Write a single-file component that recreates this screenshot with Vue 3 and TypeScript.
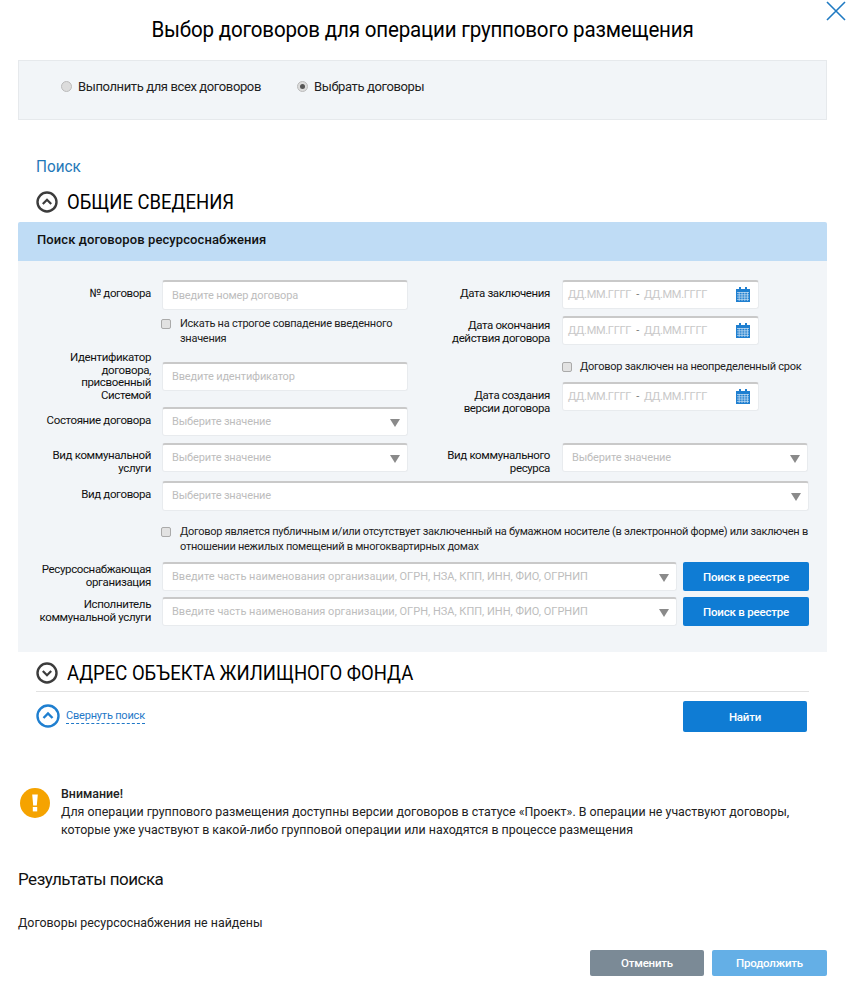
<template>
  <div class="modal">
    <svg class="close" viewBox="0 0 20 20" width="20" height="20">
      <path d="M1 1 L19 19 M19 1 L1 19" stroke="#1f7ac2" stroke-width="1.6" fill="none" />
    </svg>
    <h1 class="title">Выбор договоров для операции группового размещения</h1>

    <div class="radio-panel">
      <label class="radio"><span class="radio-dot"></span>Выполнить для всех договоров</label>
      <label class="radio"><span class="radio-dot on"></span>Выбрать договоры</label>
    </div>

    <div class="search-link"><span>Поиск</span></div>

    <div class="section-head first">
      <svg class="chev" viewBox="0 0 22 22" width="22" height="22">
        <circle cx="11" cy="11" r="9.5" fill="none" stroke="#3c3c3c" stroke-width="2.4" />
        <path d="M6.8 13 L11 8.8 L15.2 13" fill="none" stroke="#3c3c3c" stroke-width="2.2" />
      </svg>
      <span class="head-text">ОБЩИЕ СВЕДЕНИЯ</span>
    </div>

    <div class="form-head">Поиск договоров ресурсоснабжения</div>
    <div class="form-body">
      <div class="cols">
        <div class="col">
          <div class="row">
            <div class="lbl">№ договора</div>
            <div class="field h29 short">Введите номер договора</div>
          </div>
          <div class="check-row strict">
            <span class="cb"></span>
            <span>Искать на строгое совпадение введенного значения</span>
          </div>
          <div class="row id-row">
            <div class="lbl tight">Идентификатор договора, присвоенный Системой</div>
            <div class="field h28 short">Введите идентификатор</div>
          </div>
          <div class="row state-row">
            <div class="lbl">Состояние договора</div>
            <div class="field h28 select short">Выберите значение<i class="arrow"></i></div>
          </div>
          <div class="row kind-row fixed">
            <div class="lbl tight">Вид коммунальной услуги</div>
            <div class="field h28 select short">Выберите значение<i class="arrow"></i></div>
          </div>
        </div>

        <div class="col right">
          <div class="row">
            <div class="lbl">Дата заключения</div>
            <div class="field h28 date">
              <span>ДД.ММ.ГГГГ</span><b>-</b><span>ДД.ММ.ГГГГ</span>
              <svg class="cal" viewBox="0 0 14 15" width="14" height="15">
                <path d="M0 2h14v13H0z" fill="#1f7fd0" />
                <path d="M3 0h2v3H3zM9 0h2v3H9z" fill="#1f7fd0" />
                <path d="M1 5.5h12M1 7.8h12M1 10.1h12M1 12.4h12M3.2 5v9M6 5v9M8.8 5v9M11.4 5v9" stroke="#cfe2f3" stroke-width=".7" />
              </svg>
            </div>
          </div>
          <div class="row end-row">
            <div class="lbl tight">Дата окончания<br />действия договора</div>
            <div class="field h28 date">
              <span>ДД.ММ.ГГГГ</span><b>-</b><span>ДД.ММ.ГГГГ</span>
              <svg class="cal" viewBox="0 0 14 15" width="14" height="15">
                <path d="M0 2h14v13H0z" fill="#1f7fd0" />
                <path d="M3 0h2v3H3zM9 0h2v3H9z" fill="#1f7fd0" />
                <path d="M1 5.5h12M1 7.8h12M1 10.1h12M1 12.4h12M3.2 5v9M6 5v9M8.8 5v9M11.4 5v9" stroke="#cfe2f3" stroke-width=".7" />
              </svg>
            </div>
          </div>
          <div class="check-row open-term">
            <span class="cb"></span>
            <span>Договор заключен на неопределенный срок</span>
          </div>
          <div class="row created-row fixed">
            <div class="lbl tight">Дата создания<br />версии договора</div>
            <div class="field h28 date">
              <span>ДД.ММ.ГГГГ</span><b>-</b><span>ДД.ММ.ГГГГ</span>
              <svg class="cal" viewBox="0 0 14 15" width="14" height="15">
                <path d="M0 2h14v13H0z" fill="#1f7fd0" />
                <path d="M3 0h2v3H3zM9 0h2v3H9z" fill="#1f7fd0" />
                <path d="M1 5.5h12M1 7.8h12M1 10.1h12M1 12.4h12M3.2 5v9M6 5v9M8.8 5v9M11.4 5v9" stroke="#cfe2f3" stroke-width=".7" />
              </svg>
            </div>
          </div>
          <div class="row resource-row fixed">
            <div class="lbl tight">Вид коммунального<br />ресурса</div>
            <div class="field h28 select short">Выберите значение<i class="arrow"></i></div>
          </div>
        </div>
      </div>

      <div class="row contract-row">
        <div class="lbl">Вид договора</div>
        <div class="field h29 select grow short">Выберите значение<i class="arrow"></i></div>
      </div>

      <div class="check-row public">
        <span class="cb"></span>
        <span>Договор является публичным и/или отсутствует заключенный на бумажном носителе (в электронной форме) или заключен в отношении нежилых помещений в многоквартирных домах</span>
      </div>

      <div class="row org-row fixed">
        <div class="lbl tight">Ресурсоснабжающая организация</div>
        <div class="field h28 select grow">Введите часть наименования организации, ОГРН, НЗА, КПП, ИНН, ФИО, ОГРНИП<i class="arrow"></i></div>
        <button class="btn registry">Поиск в реестре</button>
      </div>
      <div class="row org-row fixed">
        <div class="lbl tight">Исполнитель<br />коммунальной услуги</div>
        <div class="field h28 select grow">Введите часть наименования организации, ОГРН, НЗА, КПП, ИНН, ФИО, ОГРНИП<i class="arrow"></i></div>
        <button class="btn registry">Поиск в реестре</button>
      </div>
    </div>

    <div class="section-head address">
      <svg class="chev" viewBox="0 0 22 22" width="22" height="22">
        <circle cx="11" cy="11" r="9.5" fill="none" stroke="#3c3c3c" stroke-width="2.4" />
        <path d="M6.8 9 L11 13.2 L15.2 9" fill="none" stroke="#3c3c3c" stroke-width="2.2" />
      </svg>
      <span class="head-text">АДРЕС ОБЪЕКТА ЖИЛИЩНОГО ФОНДА</span>
    </div>

    <div class="search-actions">
      <div class="collapse">
        <svg viewBox="0 0 24 24" width="24" height="24">
          <circle cx="12" cy="12" r="10.5" fill="none" stroke="#1f7fd0" stroke-width="2.4" />
          <path d="M7.5 14 L12 9.5 L16.5 14" fill="none" stroke="#1f7fd0" stroke-width="2.4" />
        </svg>
        <span>Свернуть поиск</span>
      </div>
      <button class="btn find">Найти</button>
    </div>

    <div class="notice">
      <svg viewBox="0 0 30 30" width="30" height="30">
        <circle cx="15" cy="15" r="15" fill="#f5a300" />
        <path d="M12.2 6.5h5.6l-1 11h-3.6z" fill="#fff" />
        <rect x="12.8" y="19" width="4.4" height="4.4" fill="#fff" />
      </svg>
      <div class="notice-text">
        <strong>Внимание!</strong>
        <p>Для операции группового размещения доступны версии договоров в статусе «Проект». В операции не участвуют договоры, которые уже участвуют в какой-либо групповой операции или находятся в процессе размещения</p>
      </div>
    </div>

    <h2 class="results">Результаты поиска</h2>
    <div class="empty">Договоры ресурсоснабжения не найдены</div>

    <div class="footer">
      <button class="btn cancel">Отменить</button>
      <button class="btn proceed">Продолжить</button>
    </div>
  </div>
</template>

<script setup lang="ts">
</script>

<style>
html, body {
  background: #fff;
}
</style>

<style scoped>
.modal {
  position: relative;
  width: 849px;
  height: 985px;
  box-sizing: border-box;
  padding: 0 22px 0 18px;
  font-family: Roboto, "Liberation Sans", sans-serif;
  font-size: 12px;
  color: #111;
  overflow: hidden;
}

.close {
  position: absolute;
  top: 1px;
  right: 3px;
}

.title {
  margin: 0;
  padding-top: 17px;
  height: 60px;
  box-sizing: border-box;
  text-align: center;
  font-size: 22px;
  line-height: 26px;
  font-weight: 400;
  color: #000;
  letter-spacing: -0.2px;
  transform: scaleX(0.934);
}

.radio-panel {
  height: 60px;
  box-sizing: border-box;
  display: flex;
  gap: 36px;
  padding: 17px 0 0 42px;
  background: #f2f5f8;
  border: 1px solid #e6e9ec;
}

.radio {
  display: flex;
  align-items: center;
  gap: 6px;
  height: 17px;
  font-size: 13px;
  letter-spacing: -0.38px;
  color: #222;
}

.radio-dot {
  width: 9px;
  height: 9px;
  border-radius: 50%;
  background: #dcdcdc;
  border: 1px solid #bbb;
  position: relative;
}

.radio-dot.on::after {
  content: "";
  position: absolute;
  top: 2px;
  left: 2px;
  width: 5px;
  height: 5px;
  border-radius: 50%;
  background: #555;
}

.search-link {
  margin: 36px 0 0 18px;
  font-size: 17px;
  line-height: 20px;
  color: #1f78b8;
}

.search-link span {
  display: inline-block;
  transform: scaleX(0.9);
  transform-origin: left;
}

.section-head {
  display: flex;
  align-items: center;
  gap: 9px;
  font-size: 21px;
  line-height: 26px;
  color: #000;
  white-space: nowrap;
}

.head-text {
  display: inline-block;
  transform: scaleX(0.88);
  transform-origin: left;
}

.section-head.first {
  margin: 13px 0 0 18px;
  height: 26px;
}

.form-head {
  margin-top: 7px;
  height: 39px;
  line-height: 36px;
  padding-left: 19px;
  background: #bfdcf5;
  font-weight: 500;
  font-size: 13px;
  letter-spacing: 0.1px;
  color: #111;
  border-radius: 2px 2px 0 0;
}

.form-body {
  height: 391px;
  box-sizing: border-box;
  padding: 19px 18px 0;
  background: #f2f5f8;
}

.cols {
  display: flex;
}

.col {
  flex: none;
  width: 372px;
}

.col.right {
  width: 401px;
}

.row {
  display: flex;
  align-items: flex-start;
}

.row.fixed {
  height: 29px;
}

.lbl {
  flex: none;
  width: 115px;
  margin-right: 11px;
  padding-top: 6px;
  text-align: right;
  font-size: 11.5px;
  letter-spacing: -0.37px;
  line-height: 14px;
  color: #111;
}

.lbl.tight {
  line-height: 12.5px;
  padding-top: 6px;
}

.right .lbl {
  width: 142px;
  margin-right: 12px;
}

.field {
  position: relative;
  flex: none;
  width: 246px;
  box-sizing: border-box;
  padding-left: 9px;
  background: #fff;
  border: 1px solid #e8ebee;
  border-top: 2px solid #c9c9c9;
  border-radius: 3px;
  color: #bdbdbd;
  font-size: 11px;
}

.short {
  letter-spacing: -0.15px;
}

.h28 {
  height: 29px;
  line-height: 26px;
}

.h29 {
  height: 30px;
  line-height: 27px;
}

.grow {
  flex: 1;
  width: auto;
}

.arrow {
  position: absolute;
  top: 10px;
  right: 7px;
  width: 0;
  height: 0;
  border-left: 5.5px solid transparent;
  border-right: 5.5px solid transparent;
  border-top: 8px solid #8a8a8a;
}

.date {
  width: 197px;
  padding-left: 5px;
  font-size: 11px;
  letter-spacing: -0.3px;
  color: #c8c8c8;
}

.date b {
  font-weight: 400;
  color: #777;
  margin: 0 5px;
}

.cal {
  position: absolute;
  top: 5px;
  right: 8px;
}

.check-row {
  display: flex;
  gap: 8px;
  font-size: 11px;
  letter-spacing: -0.26px;
  line-height: 15px;
  color: #222;
}

.cb {
  flex: none;
  width: 8px;
  height: 8px;
  margin-top: 3px;
  background: #e2e2e2;
  border: 1px solid #aaa;
  border-radius: 2px;
}

.strict {
  margin: 6px 0 0 125px;
  width: 247px;
  gap: 9px;
}

.id-row {
  margin-top: 6px;
  height: 48px;
}

.id-row .lbl {
  padding-top: 0;
  margin-top: -1px;
}

.id-row .field {
  margin-top: 10px;
}

.state-row,
.kind-row,
.end-row {
  margin-top: 7px;
}

.end-row .lbl {
  padding-top: 3px;
}

.open-term {
  margin: 14px 0 0 154px;
  white-space: nowrap;
}

.created-row {
  margin-top: 8px;
}

.created-row .lbl {
  padding-top: 7px;
}

.resource-row {
  margin-top: 32px;
}

.contract-row {
  margin-top: 9px;
}

.contract-row .field {
  line-height: 26px;
}

.public {
  margin: 13px 0 0 125px;
  gap: 9px;
}

.org-row {
  margin-top: 6px;
}

.org-row .lbl.tight {
  padding-top: 1px;
}

.public + .org-row {
  margin-top: 8px;
}

.btn {
  border: 0;
  border-radius: 2px;
  color: #fff;
  font-family: inherit;
  font-size: 11.5px;
  letter-spacing: -0.2px;
  font-weight: 500;
}

.registry {
  flex: none;
  width: 126px;
  height: 29px;
  margin-left: 6px;
  background: #0f7cd4;
}

.section-head.address {
  margin: 8px 0 0 18px;
  height: 26px;
}

.search-actions {
  position: relative;
  margin: 5px 18px 0;
  height: 45px;
  border-top: 1px solid #e2e2e2;
  display: flex;
  align-items: flex-start;
  justify-content: space-between;
  padding-top: 9px;
  box-sizing: border-box;
}

.collapse {
  display: flex;
  align-items: center;
  gap: 6px;
  margin-top: 3px;
  color: #1f78c8;
  font-size: 11px;
  letter-spacing: -0.2px;
}

.collapse span {
  border-bottom: 1px dashed #1f78c8;
  padding-bottom: 1px;
}

.find {
  width: 124px;
  height: 31px;
  margin-right: 2px;
  background: #0f7cd4;
}

.notice {
  display: flex;
  gap: 11px;
  margin-top: 49px;
  padding-left: 2px;
}

.notice svg {
  flex: none;
  margin-top: 3px;
}

.notice-text {
  width: 745px;
  font-size: 12.4px;
  line-height: 18px;
  color: #222;
}

.notice-text strong {
  font-weight: 500;
  display: block;
}

.notice-text p {
  margin: 0;
}

.results {
  margin: 30px 0 0;
  font-size: 17px;
  line-height: 20px;
  font-weight: 400;
  letter-spacing: -0.5px;
  color: #111;
}

.empty {
  margin-top: 26px;
  font-size: 12.4px;
  line-height: 16px;
  color: #222;
}

.footer {
  display: flex;
  justify-content: flex-end;
  gap: 8px;
  margin-top: 19px;
}

.cancel {
  width: 114px;
  height: 26px;
  background: #7b8a96;
}

.proceed {
  width: 115px;
  height: 26px;
  background: #64afe6;
}
</style>
